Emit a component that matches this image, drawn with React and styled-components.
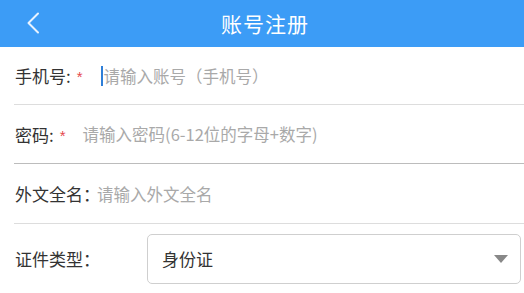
import React from "react";
import styled, { createGlobalStyle } from "styled-components";

const GlobalStyle = createGlobalStyle`
    html, body {
        margin: 0;
        padding: 0;
        background: #ffffff;
        font-family: "Noto Sans CJK SC", "Noto Sans", sans-serif;
    }
`;

const Page = styled.div`
    width: 524px;
    height: 293px;
    overflow: hidden;
    display: flex;
    flex-direction: column;
`;

const Header = styled.header`
    height: 47px;
    flex-shrink: 0;
    background: #3c9cf6;
    display: flex;
    align-items: center;
    justify-content: center;
    position: relative;
`;

const BackButton = styled.button`
    position: absolute;
    left: 20px;
    top: 9px;
    width: 26px;
    height: 28px;
    padding: 0;
    border: none;
    background: none;
    display: flex;
    align-items: center;
    justify-content: center;
`;

const Title = styled.h1`
    margin: 0 0 2px 6px;
    font-size: 21px;
    font-weight: 400;
    color: #ffffff;
    letter-spacing: 1px;
`;

const Form = styled.div`
    display: flex;
    flex-direction: column;
`;

const Row = styled.div`
    height: ${(p) => p.h}px;
    margin-left: 14px;
    padding-left: 1px;
    display: flex;
    align-items: center;
    border-bottom: ${(p) => (p.noLine ? "none" : `1px solid ${p.line || "#dddddd"}`)};
    box-sizing: border-box;
`;

const Label = styled.span`
    font-size: 17px;
    color: #333333;
    width: ${(p) => (p.w ? `${p.w}px` : "auto")};
    flex-shrink: 0;
`;

const Star = styled.span`
    color: #e5484d;
    font-family: "Liberation Sans", sans-serif;
    font-size: 15px;
    margin-left: 6px;
    margin-right: ${(p) => p.gap}px;
    padding-top: 2px;
`;

const Cursor = styled.span`
    display: inline-block;
    width: 2px;
    height: 20px;
    background: #2f7fd8;
    margin-right: 1px;
`;

const Placeholder = styled.span`
    font-size: 16.5px;
    color: #a9a9a9;
    margin-left: ${(p) => p.ml || 0}px;
    white-space: nowrap;
`;

const Select = styled.div`
    width: 374px;
    height: 50px;
    box-sizing: border-box;
    border: 1px solid #cfcfcf;
    border-radius: 5px;
    display: flex;
    align-items: center;
    justify-content: space-between;
    padding: 0 12px 0 14px;
    font-size: 17px;
    color: #333333;
`;

const Caret = styled.span`
    width: 0;
    height: 0;
    border-left: 7px solid transparent;
    border-right: 7px solid transparent;
    border-top: 8px solid #888888;
`;

export default function App() {
    return (
        <>
            <GlobalStyle />
            <Page>
                <Header>
                    <BackButton>
                        <svg width="14" height="22" viewBox="0 0 14 22">
                            <path
                                d="M12 1.5 L2.5 11 L12 20.5"
                                fill="none"
                                stroke="#e8f3ff"
                                strokeWidth="2"
                                strokeLinecap="round"
                                strokeLinejoin="round"
                            />
                        </svg>
                    </BackButton>
                    <Title>账号注册</Title>
                </Header>
                <Form>
                    <Row h={58}>
                        <Label>手机号:</Label>
                        <Star gap={18}>*</Star>
                        <Cursor />
                        <Placeholder>请输入账号（手机号）</Placeholder>
                    </Row>
                    <Row h={59} line="#bcbcbc">
                        <Label>密码:</Label>
                        <Star gap={17}>*</Star>
                        <Placeholder>请输入密码(6-12位的字母+数字)</Placeholder>
                    </Row>
                    <Row h={60}>
                        <Label>外文全名：</Label>
                        <Placeholder ml={-3}>请输入外文全名</Placeholder>
                    </Row>
                    <Row h={69} noLine>
                        <Label w={132}>证件类型：</Label>
                        <Select>
                            <span>身份证</span>
                            <Caret />
                        </Select>
                    </Row>
                </Form>
            </Page>
        </>
    );
}
